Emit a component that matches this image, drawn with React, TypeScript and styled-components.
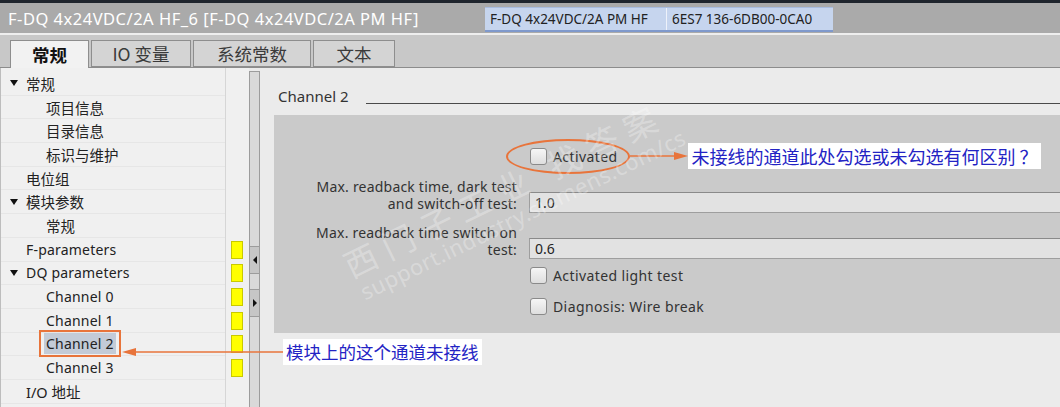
import styled, { createGlobalStyle } from "styled-components";

const GlobalStyle = createGlobalStyle`
  html, body {
    margin: 0;
    padding: 0;
    background: #ebebeb;
  }
  * {
    box-sizing: border-box;
  }
`;

const FONT = `"Noto Sans", "Noto Sans CJK SC", sans-serif`;
const CJK = `"Noto Sans CJK SC", "Noto Sans", sans-serif`;

interface TreeItem {
  label: string;
  level: number;
  open?: boolean;
  status?: boolean;
  selected?: boolean;
}

const items: TreeItem[] = [
  { label: "常规", level: 0, open: true },
  { label: "项目信息", level: 1 },
  { label: "目录信息", level: 1 },
  { label: "标识与维护", level: 1 },
  { label: "电位组", level: 0 },
  { label: "模块参数", level: 0, open: true },
  { label: "常规", level: 1 },
  { label: "F-parameters", level: 0, status: true },
  { label: "DQ parameters", level: 0, open: true, status: true },
  { label: "Channel 0", level: 1, status: true },
  { label: "Channel 1", level: 1, status: true },
  { label: "Channel 2", level: 1, status: true, selected: true },
  { label: "Channel 3", level: 1, status: true },
  { label: "I/O 地址", level: 0 },
];

const tabs = ["常规", "IO 变量", "系统常数", "文本"];

const Page = styled.div`
  position: relative;
  width: 1060px;
  height: 407px;
  overflow: hidden;
  display: flex;
  flex-direction: column;
  font-family: ${FONT};
  background: #ebebeb;
`;

const TopStrip = styled.div`
  height: 3px;
  background: #1f252d;
`;

const TitleBar = styled.div`
  height: 30px;
  background: #aaaaaa;
  display: flex;
  align-items: center;
  padding-left: 8px;
`;

const Title = styled.div`
  width: 477px;
  color: #ffffff;
  font-size: 16.5px;
  letter-spacing: 0.5px;
  white-space: nowrap;
`;

const InfoGroup = styled.div`
  display: flex;
  height: 25px;
  margin-top: 2px;
  background: #c6d5ee;
  border-top: 1px solid #a9bde0;
  border-bottom: 2px solid #7f99cc;
`;

const InfoCell = styled.div<{ $w: number }>`
  width: ${(p) => p.$w}px;
  padding-left: 5px;
  display: flex;
  align-items: center;
  font-size: 13.5px;
  color: #222;
  & + & {
    border-left: 1px solid #eef2fa;
  }
`;

const Gap = styled.div`
  height: 2px;
  background: #eeeeee;
`;

const TabBar = styled.div`
  height: 33px;
  background: #c8c8c8;
  border-bottom: 1px solid #8c8c8c;
  display: flex;
  align-items: flex-end;
  padding-left: 10px;
  gap: 2px;
`;

const Tab = styled.div<{ $w: number; $active?: boolean }>`
  width: ${(p) => p.$w}px;
  height: ${(p) => (p.$active ? 28 : 27)}px;
  margin-bottom: ${(p) => (p.$active ? -1 : 0)}px;
  background: ${(p) => (p.$active ? "#f2f2f2" : "#d4d4d4")};
  border: 1px solid #8e8e8e;
  border-bottom: ${(p) => (p.$active ? "none" : "1px solid #8e8e8e")};
  display: flex;
  align-items: center;
  justify-content: center;
  font-family: ${CJK};
  font-size: 17.5px;
  font-weight: ${(p) => (p.$active ? 700 : 400)};
  color: ${(p) => (p.$active ? "#111" : "#3a3a3a")};
`;

const Body = styled.div`
  flex: 1;
  display: flex;
  min-height: 0;
`;

const TreePanel = styled.div`
  width: 249px;
  display: flex;
  background: #f0f0f0;
  border-left: 1px solid #bdbdbd;
`;

const TreeList = styled.div`
  width: 225px;
  padding-top: 4px;
  border-right: 1px solid #d6d6d6;
`;

const StatusList = styled.div`
  width: 23px;
  padding-top: 4px;
`;

const Row = styled.div<{ $level?: number }>`
  height: 23.7px;
  display: flex;
  align-items: center;
  padding-left: ${(p) => 8 + (p.$level ?? 0) * 20}px;
  border-bottom: 1px solid #e6e6e6;
  color: #222;
  white-space: nowrap;
`;

const StatusRow = styled.div`
  height: 23.7px;
  display: flex;
  align-items: center;
  padding-left: 5px;
`;

const Caret = styled.span<{ $open?: boolean }>`
  width: 17px;
  display: inline-flex;
  align-items: center;
  &::before {
    content: "";
    display: ${(p) => (p.$open ? "block" : "none")};
    border-left: 4.5px solid transparent;
    border-right: 4.5px solid transparent;
    border-top: 6px solid #111;
    margin-left: 1px;
  }
`;

const Label = styled.span<{ $selected?: boolean; $cjk?: boolean }>`
  position: relative;
  font-size: ${(p) => (p.$cjk ? "14.5px" : "14px")};
  letter-spacing: ${(p) => (p.$cjk ? 0 : 0.2)}px;
  padding: 1px 2px;
  margin-left: -2px;
  background: ${(p) => (p.$selected ? "#c3cbd7" : "transparent")};
  &::after {
    content: "";
    display: ${(p) => (p.$selected ? "block" : "none")};
    position: absolute;
    inset: -3px -5px;
    border: 2px solid #e8743b;
  }
`;

const Marker = styled.div`
  width: 12px;
  height: 18px;
  background: #ffff00;
  border: 1px solid #c9c900;
`;

const Splitter = styled.div`
  width: 11px;
  margin-top: 3px;
  background: #d9d9d9;
  border: 1px solid #9c9c9c;
  border-bottom: none;
  display: flex;
  flex-direction: column;
  padding-top: 174px;
  gap: 15px;
`;

const SplitButton = styled.div<{ $dir: "left" | "right" }>`
  height: 28px;
  background: #c6c6c6;
  border-top: 1px solid #9c9c9c;
  border-bottom: 1px solid #9c9c9c;
  display: flex;
  align-items: center;
  justify-content: center;
  &::before {
    content: "";
    border-top: 4px solid transparent;
    border-bottom: 4px solid transparent;
    ${(p) =>
      p.$dir === "left"
        ? "border-right: 4px solid #111;"
        : "border-left: 4px solid #111;"}
  }
`;

const Content = styled.div`
  flex: 1;
  padding: 18px 0 0 14px;
  background: #ebebeb;
`;

const SectionHeader = styled.div`
  height: 20px;
  display: flex;
  align-items: flex-end;
  padding-left: 4px;
  margin-bottom: 9px;
`;

const SectionTitle = styled.div`
  font-size: 15px;
  color: #333;
  line-height: 20px;
`;

const SectionRule = styled.div`
  flex: 1;
  margin: 0 0 2px 17px;
  border-top: 1px solid #4a4a4a;
`;

const FormPanel = styled.div`
  position: relative;
  background: #cacaca;
  padding: 29px 0 16px;
  height: 218px;
`;

const FormRow = styled.div<{ $top?: number }>`
  display: grid;
  grid-template-columns: 243px 1fr;
  column-gap: 12px;
  align-items: end;
  margin-top: ${(p) => p.$top ?? 0}px;
`;

const FieldLabel = styled.div`
  text-align: right;
  font-size: 14px;
  letter-spacing: 0.2px;
  line-height: 16.5px;
  color: #333;
  margin-bottom: 1px;
  white-space: nowrap;
`;

const Input = styled.div`
  height: 21px;
  background: #e2e2e2;
  border: 1px solid #9e9e9e;
  border-right: none;
  border-top-color: #8a8a8a;
  display: flex;
  align-items: center;
  padding-left: 5px;
  font-size: 14px;
  color: #222;
`;

const CheckLine = styled.div`
  height: 24px;
  display: flex;
  align-items: center;
`;

const CheckWrap = styled.div<{ $ringed?: boolean }>`
  position: relative;
  display: flex;
  align-items: center;
  height: 24px;
  margin-left: 1px;
  &::after {
    content: "";
    display: ${(p) => (p.$ringed ? "block" : "none")};
    position: absolute;
    left: -24px;
    right: -13px;
    top: -5px;
    bottom: -6px;
    border: 2px solid #e8743b;
    border-radius: 50%;
  }
`;

const Box = styled.span`
  width: 17px;
  height: 17px;
  border: 1px solid #8a8a8a;
  border-radius: 3px;
  background: linear-gradient(#f6f6f6, #dedede);
  margin-right: 6px;
`;

const CheckText = styled.span`
  font-size: 14px;
  letter-spacing: 0.4px;
  color: #333;
`;

const Callout = styled.div<{ $size: number }>`
  background: #ffffff;
  color: #2323c4;
  font-family: ${CJK};
  font-size: ${(p) => p.$size}px;
  line-height: 26px;
  height: 26px;
  padding: 0 3px;
  white-space: nowrap;
`;

const Annotation = styled.div`
  position: absolute;
  left: 122px;
  top: 339px;
  display: flex;
  align-items: center;
`;

const Watermark = styled.div`
  position: absolute;
  pointer-events: none;
  color: rgba(255, 255, 255, 0.3);
  white-space: nowrap;
  transform-origin: left bottom;
  transform: rotate(-26deg);
`;

const MarkCjk = styled(Watermark)`
  left: 356px;
  top: 240px;
  font-family: ${CJK};
  font-size: 33px;
  letter-spacing: 9px;
`;

const MarkUrl = styled(Watermark)`
  left: 368px;
  top: 276px;
  font-size: 22px;
  letter-spacing: 0.5px;
`;

const ArrowSlot = styled.div`
  display: flex;
  margin-left: 13px;
`;

const Arrow = ({ width, dir }: { width: number; dir: "left" | "right" }) => (
  <svg width={width} height="12" viewBox={`0 0 ${width} 12`}>
    {dir === "right" ? (
      <>
        <line x1="0" y1="6" x2={width - 10} y2="6" stroke="#e8743b" strokeWidth="1.6" />
        <polygon points={`${width - 14},2 ${width},6 ${width - 14},10`} fill="#e8743b" />
      </>
    ) : (
      <>
        <line x1="10" y1="6" x2={width} y2="6" stroke="#e8743b" strokeWidth="1.4" />
        <polygon points="0,6 14,2 14,10" fill="#e8743b" />
      </>
    )}
  </svg>
);

const isCjk = (s: string) => /[\u4e00-\u9fff]/.test(s);

const App = () => {
  return (
    <>
      <GlobalStyle />
      <Page>
        <TopStrip />
        <TitleBar>
          <Title>F-DQ 4x24VDC/2A HF_6 [F-DQ 4x24VDC/2A PM HF]</Title>
          <InfoGroup>
            <InfoCell $w={181}>F-DQ 4x24VDC/2A PM HF</InfoCell>
            <InfoCell $w={167}>6ES7 136-6DB00-0CA0</InfoCell>
          </InfoGroup>
        </TitleBar>
        <Gap />
        <TabBar>
          {tabs.map((t, i) => (
            <Tab key={t} $w={[79, 100, 118, 82][i]} $active={i === 0}>
              {t}
            </Tab>
          ))}
        </TabBar>
        <Body>
          <TreePanel>
            <TreeList>
              {items.map((item, index) => (
                <Row key={index} $level={item.level}>
                  <Caret $open={item.open} />
                  <Label $selected={item.selected} $cjk={isCjk(item.label)}>
                    {item.label}
                  </Label>
                </Row>
              ))}
            </TreeList>
            <StatusList>
              {items.map((item, index) => (
                <StatusRow key={index}>{item.status && <Marker />}</StatusRow>
              ))}
            </StatusList>
          </TreePanel>
          <Splitter>
            <SplitButton $dir="left" />
            <SplitButton $dir="right" />
          </Splitter>
          <Content>
            <SectionHeader>
              <SectionTitle>Channel 2</SectionTitle>
              <SectionRule />
            </SectionHeader>
            <FormPanel>
              <FormRow>
                <div />
                <CheckLine>
                  <CheckWrap $ringed>
                    <Box />
                    <CheckText>Activated</CheckText>
                  </CheckWrap>
                  <ArrowSlot>
                    <Arrow width={58} dir="right" />
                  </ArrowSlot>
                  <Callout $size={18}>未接线的通道此处勾选或未勾选有何区别 ？</Callout>
                </CheckLine>
              </FormRow>
              <FormRow $top={11}>
                <FieldLabel>
                  Max. readback time, dark test
                  <br />
                  and switch-off test:
                </FieldLabel>
                <Input>1.0</Input>
              </FormRow>
              <FormRow $top={12}>
                <FieldLabel>
                  Max. readback time switch on
                  <br />
                  test:
                </FieldLabel>
                <Input>0.6</Input>
              </FormRow>
              <FormRow $top={4}>
                <div />
                <CheckLine>
                  <CheckWrap>
                    <Box />
                    <CheckText>Activated light test</CheckText>
                  </CheckWrap>
                </CheckLine>
              </FormRow>
              <FormRow $top={7}>
                <div />
                <CheckLine>
                  <CheckWrap>
                    <Box />
                    <CheckText>Diagnosis: Wire break</CheckText>
                  </CheckWrap>
                </CheckLine>
              </FormRow>
            </FormPanel>
          </Content>
        </Body>
        <Annotation>
          <Arrow width={161} dir="left" />
          <Callout $size={17.5}>模块上的这个通道未接线</Callout>
        </Annotation>
        <MarkCjk>西门子工业 找答案</MarkCjk>
        <MarkUrl>support.industry.siemens.com/cs</MarkUrl>
      </Page>
    </>
  );
};

export default App;
